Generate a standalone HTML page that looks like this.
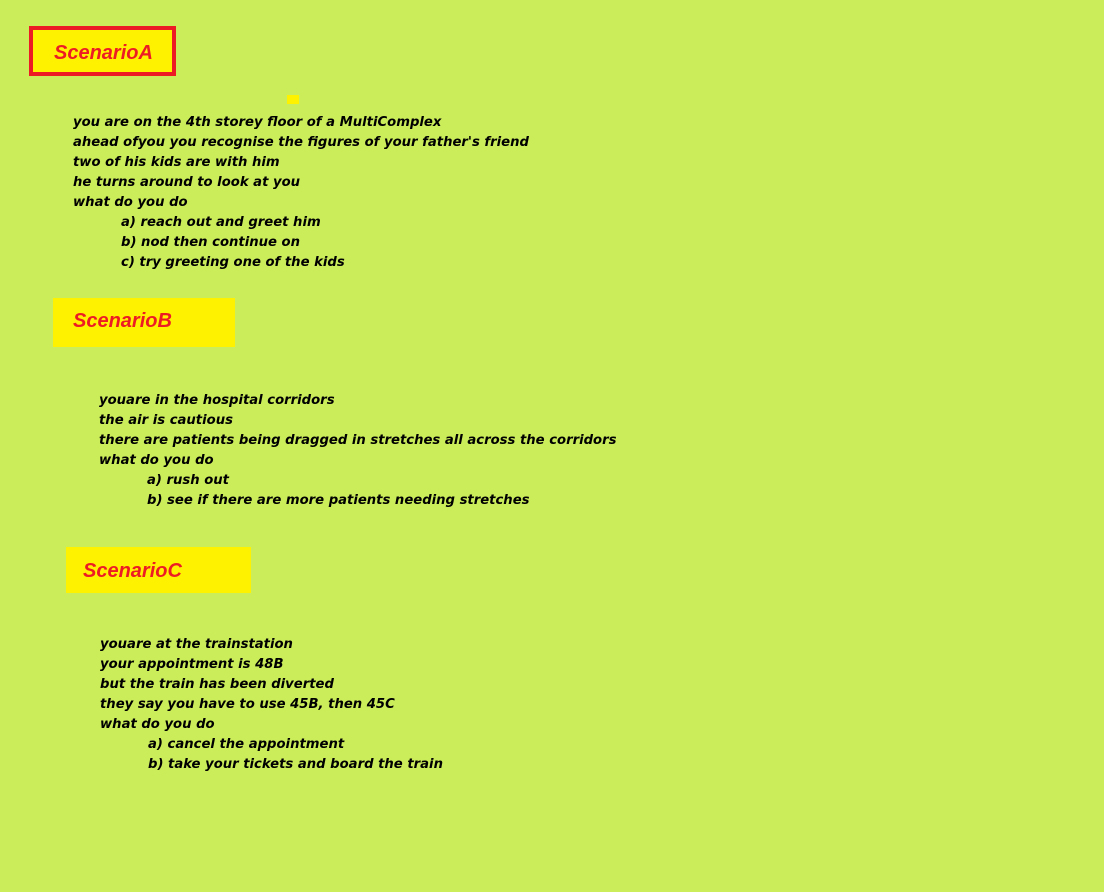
<!DOCTYPE html>
<html><head><style>
body{margin:0;width:1104px;height:892px;background:#cbed5a;position:relative;overflow:hidden}
.b{position:absolute;background:#fff200;box-sizing:border-box}
.h{position:absolute;font:italic bold 20px "Liberation Sans",sans-serif;color:#ed1c24;line-height:20px}
.t{position:absolute;font:italic bold 13.2px "DejaVu Sans",sans-serif;color:#000;line-height:20px;white-space:pre}
.t i{display:block;font-style:inherit;padding-left:48px}
</style></head><body>
<div class="b" style="left:29px;top:26px;width:147px;height:50px;border:4px solid #ed1c24"></div>
<div class="h" style="left:54px;top:43px">ScenarioA</div>
<div class="b" style="left:287px;top:95px;width:12px;height:9px"></div>
<div class="t" style="left:73px;top:113px">you are on the 4th storey floor of a MultiComplex
ahead ofyou you recognise the figures of your father's friend
two of his kids are with him
he turns around to look at you
what do you do<i>a) reach out and greet him</i><i>b) nod then continue on</i><i>c) try greeting one of the kids</i></div>
<div class="b" style="left:53px;top:298px;width:182px;height:49px"></div>
<div class="h" style="left:73px;top:311px">ScenarioB</div>
<div class="t" style="left:99px;top:391px">youare in the hospital corridors
the air is cautious
there are patients being dragged in stretches all across the corridors
what do you do<i>a) rush out</i><i>b) see if there are more patients needing stretches</i></div>
<div class="b" style="left:66px;top:547px;width:185px;height:46px"></div>
<div class="h" style="left:83px;top:561px">ScenarioC</div>
<div class="t" style="left:100px;top:635px">youare at the trainstation
your appointment is 48B
but the train has been diverted
they say you have to use 45B, then 45C
what do you do<i>a) cancel the appointment</i><i>b) take your tickets and board the train</i></div>
</body></html>
